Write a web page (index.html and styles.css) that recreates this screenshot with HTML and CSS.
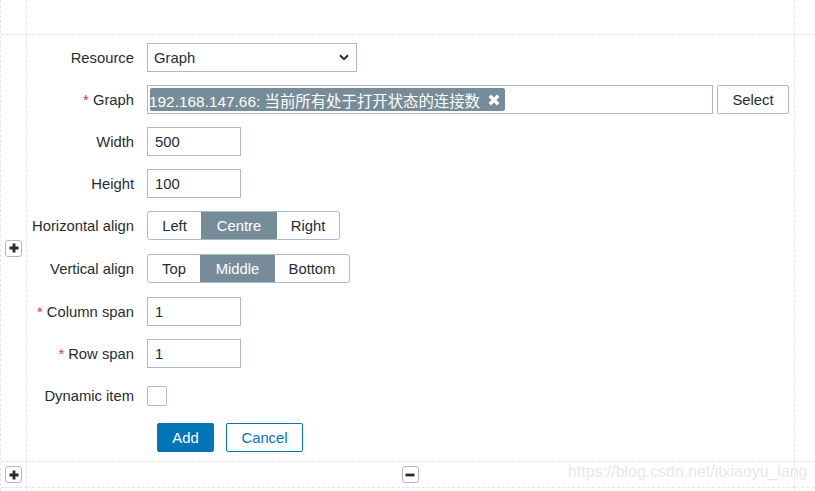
FILE: index.html
```html
<!DOCTYPE html>
<html>
<head>
<meta charset="utf-8">
<link rel="stylesheet" href="styles.css">
</head>
<body>
<div class="board">
  <div class="cell"></div>
  <div class="cell"></div>
  <div class="cell last-col"></div>

  <div class="cell side"><button class="mini" type="button"><svg viewBox="0 0 10 10" width="10" height="10"><path d="M3.6 0.5h2.8v3.1h3.1v2.8H6.4v3.1H3.6V6.4H0.5V3.6h3.1z" fill="#1f2c33"/></svg></button></div>
  <div class="cell main">
    <form class="form">
      <label class="lbl">Resource</label>
      <div class="ctl">
        <div class="select"><span>Graph</span><svg class="chev" viewBox="0 0 10 7" width="10" height="7"><path d="M1 1.2l4 4 4-4" fill="none" stroke="#1f2c33" stroke-width="2"/></svg></div>
      </div>

      <label class="lbl"><span class="req">*</span> Graph</label>
      <div class="ctl row">
        <div class="multi"><span class="tag"><span class="tag-text">192.168.147.66: 当前所有处于打开状态的连接数</span><svg class="x" viewBox="0 0 10 10" width="12" height="12"><path d="M1.5 1.5l7 7M8.5 1.5l-7 7" stroke="#fff" stroke-width="2.8" stroke-linecap="butt"/></svg></span></div>
        <button type="button" class="btn-alt">Select</button>
      </div>

      <label class="lbl">Width</label>
      <div class="ctl"><div class="input">500</div></div>

      <label class="lbl">Height</label>
      <div class="ctl"><div class="input">100</div></div>

      <label class="lbl tall">Horizontal align</label>
      <div class="ctl tall">
        <div class="seg"><span class="s1">Left</span><span class="s2 on">Centre</span><span class="s3">Right</span></div>
      </div>

      <label class="lbl tall">Vertical align</label>
      <div class="ctl tall">
        <div class="seg"><span class="v1">Top</span><span class="v2 on">Middle</span><span class="v3">Bottom</span></div>
      </div>

      <label class="lbl"><span class="req">*</span> Column span</label>
      <div class="ctl"><div class="input">1</div></div>

      <label class="lbl"><span class="req">*</span> Row span</label>
      <div class="ctl"><div class="input">1</div></div>

      <label class="lbl">Dynamic item</label>
      <div class="ctl"><span class="check"></span></div>

      <span></span>
      <div class="ctl buttons">
        <button type="button" class="btn-main">Add</button>
        <button type="button" class="btn-outline">Cancel</button>
      </div>
    </form>
  </div>
  <div class="cell last-col"></div>

  <div class="cell side"><button class="mini" type="button"><svg viewBox="0 0 10 10" width="10" height="10"><path d="M3.6 0.5h2.8v3.1h3.1v2.8H6.4v3.1H3.6V6.4H0.5V3.6h3.1z" fill="#1f2c33"/></svg></button></div>
  <div class="cell center"><button class="mini" type="button"><svg viewBox="0 0 10 10" width="10" height="10"><path d="M0.5 3.6h9v2.8h-9z" fill="#1f2c33"/></svg></button></div>
  <div class="cell last-col"></div>

  <div class="cell last-row"></div>
  <div class="cell last-row"></div>
  <div class="cell last-row last-col"></div>

  <div class="watermark">https://blog.csdn.net/itxiaoyu_lang</div>
</div>
</body>
</html>
```

FILE: styles.css
```css
* { box-sizing: border-box; }
html, body { margin: 0; padding: 0; background: #fff; }
body {
  font-family: "Liberation Sans", Arial, "Noto Sans CJK SC", sans-serif;
  font-size: 14.8px;
  color: #1f2c33;
}
.board {
  position: relative;
  width: 815px;
  height: 491px;
  display: grid;
  grid-template-columns: 26px 768px 1fr;
  grid-template-rows: 35px 427px 26px 1fr;
  border-left: 1px dashed #e3e6e8;
  overflow: hidden;
}
.cell {
  border-right: 1px dashed #e3e6e8;
  border-bottom: 1px dashed #e3e6e8;
}
.cell.last-col { border-right: none; }
.cell.last-row { border-bottom: none; }
.side, .center {
  display: flex;
  align-items: center;
  justify-content: center;
}
.mini {
  width: 17px;
  height: 17px;
  padding: 0;
  margin: 0;
  border: 1px solid #acbbc2;
  border-radius: 3px;
  background: #fff;
  display: flex;
  align-items: center;
  justify-content: center;
}
.center .mini { margin-left: -1px; }
.form {
  display: grid;
  grid-template-columns: 107px 1fr;
  column-gap: 13px;
  row-gap: 13px;
  padding-top: 8px;
}
.lbl {
  height: 29px;
  display: flex;
  align-items: center;
  justify-content: flex-end;
  white-space: nowrap;
}
.lbl.tall { height: 30px; padding-bottom: 1px; }
.req { color: #e33734; margin-right: 4px; }
.ctl { height: 29px; display: flex; align-items: center; }
.ctl.tall { height: 30px; align-items: flex-start; }
.ctl.row { gap: 4px; }
.select {
  width: 210px;
  height: 29px;
  border: 1px solid #acbbc2;
  display: flex;
  align-items: center;
  justify-content: space-between;
  padding: 0 7px 0 6px;
}
.multi {
  width: 566px;
  height: 29px;
  border: 1px solid #acbbc2;
  padding: 2px 2px;
  display: flex;
  align-items: center;
}
.tag {
  background: #768d99;
  color: #fff;
  height: 23px;
  border-radius: 2px;
  display: flex;
  align-items: center;
  padding: 0 5px 0 1px;
  white-space: nowrap;
  font-size: 15.4px;
}
.tag-text { margin-left: -2px; }
.x { margin-left: 8px; }
.btn-alt {
  width: 72px;
  height: 29px;
  background: #fff;
  border: 1px solid #acbbc2;
  border-radius: 2px;
  color: #1f2c33;
  font: inherit;
  padding: 0;
}
.input {
  width: 94px;
  height: 29px;
  border: 1px solid #acbbc2;
  padding: 0 7px;
  display: flex;
  align-items: center;
}
.seg {
  display: flex;
  height: 29px;
  border: 1px solid #acbbc2;
  border-radius: 3px;
  overflow: hidden;
}
.seg span {
  display: flex;
  align-items: center;
  justify-content: center;
  height: 100%;
  border-left: 1px solid #acbbc2;
}
.seg span:first-child { border-left: none; }
.seg .on { background: #768d99; color: #fff; border-color: #768d99; }
.seg .on + span { border-left-color: #768d99; }
.s1 { width: 53px; }
.s2 { width: 75px; }
.s3 { width: 63px; }
.v1 { width: 52px; }
.v2 { width: 74px; }
.v3 { width: 75px; }
.check {
  width: 20px;
  height: 20px;
  border: 1px solid #acbbc2;
  border-radius: 2px;
  background: #fff;
}
.buttons { gap: 12px; padding-left: 10px; }
.btn-main, .btn-outline {
  height: 29px;
  border-radius: 2px;
  font: inherit;
  padding: 0;
}
.btn-main {
  width: 57px;
  background: #0275b8;
  border: 1px solid #0275b8;
  color: #fff;
}
.btn-outline {
  width: 77px;
  background: #fff;
  border: 1px solid #0275b8;
  color: #0275b8;
}
.watermark {
  position: absolute;
  left: 567px;
  top: 463px;
  font-size: 15.9px;
  color: #e8e8e8;
  white-space: nowrap;
}
```
